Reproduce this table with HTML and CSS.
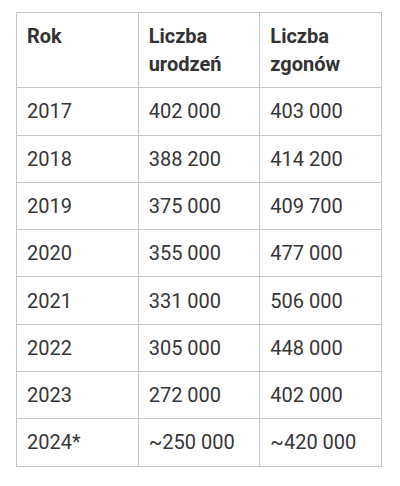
FILE: index.html
```html
<!DOCTYPE html>
<html lang="pl">
<head>
<meta charset="utf-8">
<link rel="stylesheet" href="styles.css">
</head>
<body>
<table class="data">
  <thead>
    <tr><th>Rok</th><th>Liczba urodzeń</th><th>Liczba zgonów</th></tr>
  </thead>
  <tbody>
    <tr><td>2017</td><td>402 000</td><td>403 000</td></tr>
    <tr><td>2018</td><td>388 200</td><td>414 200</td></tr>
    <tr><td>2019</td><td>375 000</td><td>409 700</td></tr>
    <tr><td>2020</td><td>355 000</td><td>477 000</td></tr>
    <tr><td>2021</td><td>331 000</td><td>506 000</td></tr>
    <tr><td>2022</td><td>305 000</td><td>448 000</td></tr>
    <tr><td>2023</td><td>272 000</td><td>402 000</td></tr>
    <tr><td>2024*</td><td>~250 000</td><td>~420 000</td></tr>
  </tbody>
</table>
</body>
</html>
```
FILE: styles.css
```css
html, body {
  margin: 0;
  padding: 0;
  background: #ffffff;
}
body {
  padding: 12px 0 0 16px;
  font-family: Roboto, "Liberation Sans", sans-serif;
  color: #363636;
}
.data {
  border-collapse: collapse;
  width: 366px;
  table-layout: fixed;
  font-size: 20px;
  line-height: 28px;
}
.data th, .data td {
  border: 1px solid #c6c6c6;
  padding: 9.15px 10px;
  text-align: left;
  vertical-align: top;
}
.data th {
  font-weight: 700;
  color: #333333;
}
.data td {
  font-weight: 400;
}
```
